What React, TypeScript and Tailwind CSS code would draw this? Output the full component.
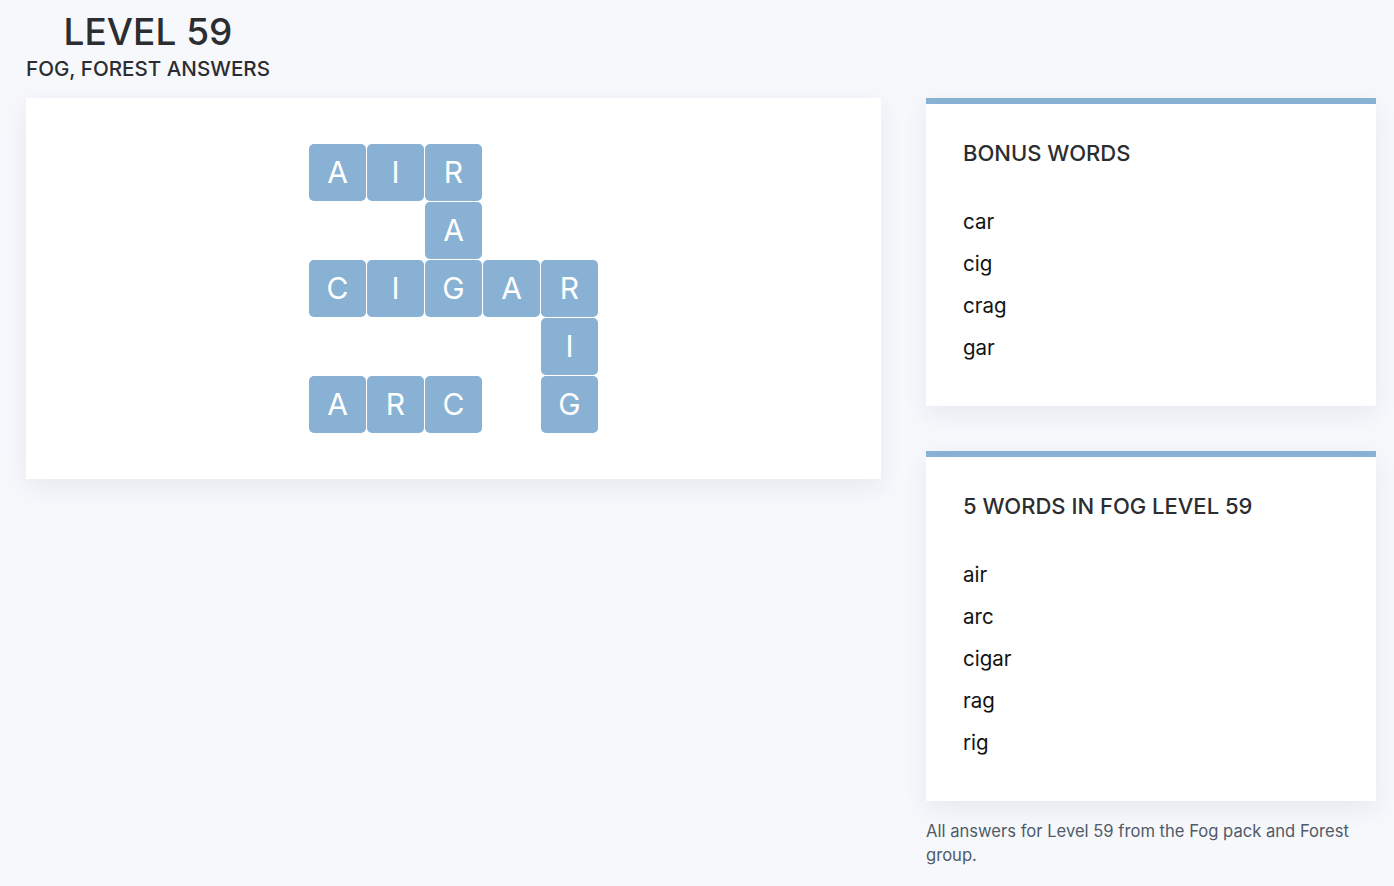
import React from "react";

const grid: (string | null)[][] = [
  ["A", "I", "R", null, null],
  [null, null, "A", null, null],
  ["C", "I", "G", "A", "R"],
  [null, null, null, null, "I"],
  ["A", "R", "C", null, "G"],
];

function Card({ title, words }: { title: string; words: string[] }) {
  return (
    <div className="bg-white border-t-[6px] border-[#88b1d4] shadow-[0_8px_24px_rgba(30,50,90,0.08)] px-[37px] pt-[35px] pb-[37px]">
      <h3 className="text-[22px] leading-[28px] font-medium text-[#2b2d31]">{title}</h3>
      <ul className="mt-[34px]">
        {words.map((w) => (
          <li key={w} className="text-[20.5px] leading-[42px] text-[#111]">
            {w}
          </li>
        ))}
      </ul>
    </div>
  );
}

export default function App() {
  return (
    <div
      className="min-h-[886px] bg-[#f7f8fc] pl-[26px] pr-[18px] pt-[8px]"
      style={{ fontFamily: "Inter, 'Noto Sans', sans-serif" }}
    >
      <header className="inline-flex flex-col items-center text-[#2b2d31]">
        <h1 className="text-[37px] leading-[48px] font-medium">LEVEL 59</h1>
        <h2 className="text-[20.6px] leading-[26px] font-medium">FOG, FOREST ANSWERS</h2>
      </header>
      <div className="flex items-start gap-[45px] mt-[16px]">
        <div className="flex-1 bg-white shadow-[0_8px_24px_rgba(30,50,90,0.08)] py-[46px] flex justify-center">
          <div className="grid grid-cols-[repeat(5,57px)] grid-rows-[repeat(5,57px)] gap-[1px]">
            {grid.flatMap((row, r) =>
              row.map((c, ci) =>
                c ? (
                  <div
                    key={`${r}-${ci}`}
                    className="bg-[#88b1d4] rounded-[5px] flex items-center justify-center text-white text-[30px]"
                  >
                    {c}
                  </div>
                ) : (
                  <div key={`${r}-${ci}`} />
                )
              )
            )}
          </div>
        </div>
        <div className="w-[450px] flex flex-col">
          <Card title="BONUS WORDS" words={["car", "cig", "crag", "gar"]} />
          <div className="mt-[45px]">
            <Card title="5 WORDS IN FOG LEVEL 59" words={["air", "arc", "cigar", "rag", "rig"]} />
          </div>
          <p className="mt-[18px] text-[16.6px] leading-[24px] text-[#4f5b67]">
            All answers for Level 59 from the Fog pack and Forest group.
          </p>
        </div>
      </div>
    </div>
  );
}
